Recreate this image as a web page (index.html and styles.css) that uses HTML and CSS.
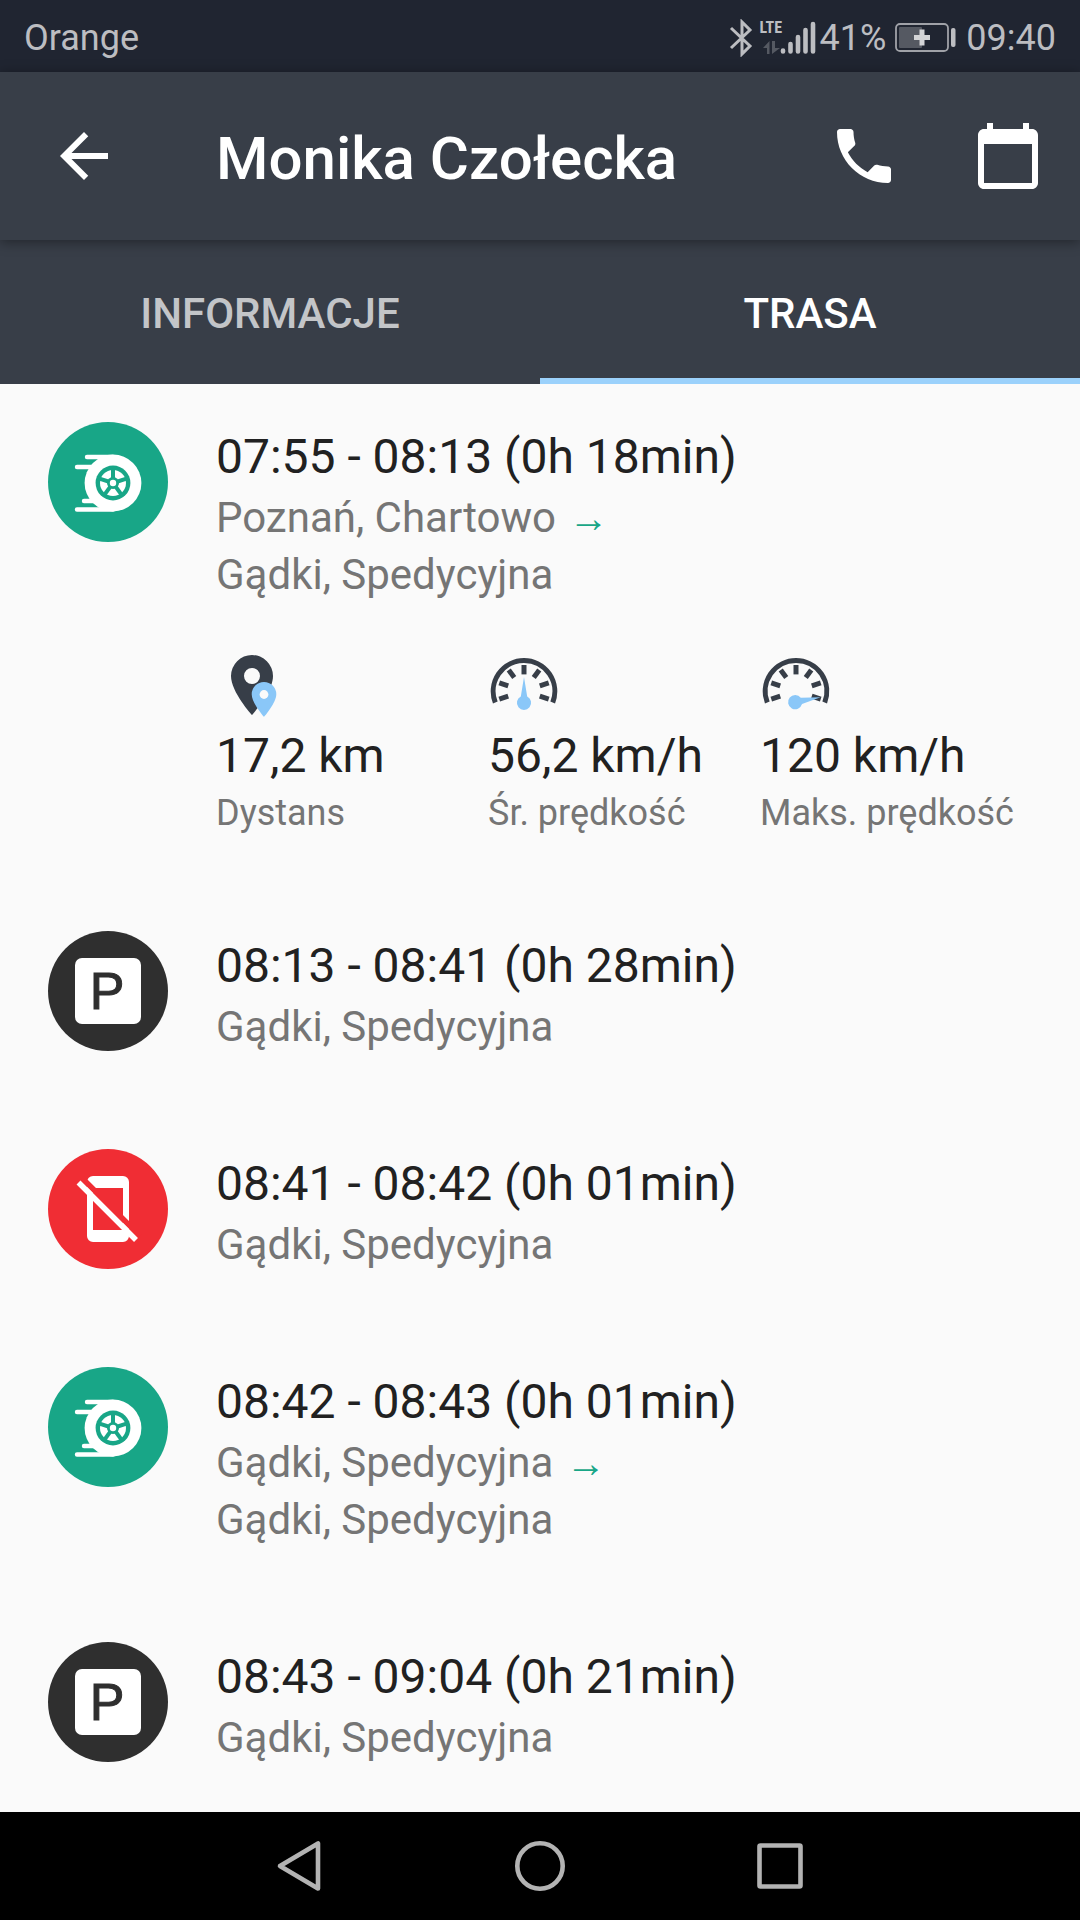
FILE: index.html
```html
<!DOCTYPE html>
<html lang="pl">
<head>
    <meta charset="UTF-8">
    <meta name="viewport" content="width=device-width, initial-scale=1.0">
    <title>Monika Czołecka - Trasa</title>
    <link rel="stylesheet" href="styles.css">
</head>
<body>
    <!-- shared icons -->
    <svg class="sprite" aria-hidden="true">
        <symbol id="icon-drive" viewBox="0 0 120 120">
            <g stroke="#fff" stroke-width="4.4" stroke-linecap="round">
                <path d="M39 35h26M29 45h20M36 79h16M29 87.500h36"/>
            </g>
            <circle cx="65" cy="61" r="28.400" fill="#fff"/>
            <circle cx="65" cy="61" r="17.400" fill="#18a687"/>
            <circle cx="65" cy="61" r="13" fill="#fff"/>
            <g stroke="#18a687" stroke-width="4">
                <path id="spoke" d="M65 61V46"/>
                <use href="#spoke" transform="rotate(72 65 61)"/>
                <use href="#spoke" transform="rotate(144 65 61)"/>
                <use href="#spoke" transform="rotate(216 65 61)"/>
                <use href="#spoke" transform="rotate(288 65 61)"/>
            </g>
            <circle cx="65" cy="61" r="6" fill="#18a687"/>
            <circle cx="65" cy="61" r="3.200" fill="#fff"/>
        </symbol>
        <symbol id="icon-gauge" viewBox="0 0 72 72">
            <path d="M7.300 50.500A30.800 30.800 0 1 1 64.700 50.500" fill="none" stroke="#373e48" stroke-width="5"/>
            <g stroke="#373e48" stroke-width="5">
                <path id="tick" d="M36 13v9.400"/>
                <use href="#tick" transform="rotate(36 36 39)"/>
                <use href="#tick" transform="rotate(72 36 39)"/>
                <use href="#tick" transform="rotate(108 36 39)"/>
                <use href="#tick" transform="rotate(-36 36 39)"/>
                <use href="#tick" transform="rotate(-72 36 39)"/>
                <use href="#tick" transform="rotate(-108 36 39)"/>
            </g>
        </symbol>
        <symbol id="icon-needle" viewBox="0 0 72 72">
            <path d="M36 25l3.200 19.500a7.100 7.100 0 1 1-6.400 0z" fill="#8ac7f8"/>
        </symbol>
    </svg>

    <div class="status-bar">
        <span class="carrier">Orange</span>
        <svg class="bluetooth" width="24" height="38" viewBox="0 0 24 38" fill="none" stroke="#bcbdc1" stroke-width="3">
            <path d="M2 9l19 18-8 8V3l8 8L2 29"/>
        </svg>
        <div class="network">
            <span class="lte">LTE</span>
            <svg width="56" height="36" viewBox="0 0 56 36">
                <path d="M9.500 21v13H7V28H3zM12 34V21h3v7h5z" fill="#555962"/>
                <g stroke="#bcbdc1" stroke-width="4.600" stroke-linecap="round">
                    <path d="M23 30.500v1M30.500 24v7.500M38 17v14.500M45.500 10v21.500M53 4v27.500"/>
                </g>
            </svg>
        </div>
        <span class="percent">41%</span>
        <svg class="battery" width="64" height="32" viewBox="0 0 64 32">
            <rect x="2" y="2" width="52" height="27" rx="4" fill="none" stroke="#a0a2a8" stroke-width="1.800"/>
            <rect x="5" y="5" width="23" height="21" rx="1" fill="#555962"/>
            <path d="M20 15.500h16M28 7.500v16" stroke="#d3d4d6" stroke-width="5"/>
            <rect x="57" y="6" width="4.500" height="19" rx="2" fill="#bcbdc1"/>
        </svg>
        <span class="clock">09:40</span>
    </div>

    <header class="toolbar">
        <button type="button" class="icon-button" aria-label="Wstecz">
            <svg viewBox="0 0 24 24"><path d="M20 11H7.830l5.590-5.590L12 4l-8 8 8 8 1.410-1.410L7.830 13H20v-2z"/></svg>
        </button>
        <h1>Monika Czołecka</h1>
        <div class="actions">
            <button type="button" class="icon-button" aria-label="Zadzwoń">
                <svg viewBox="0 0 24 24"><path d="M6.620 10.790c1.440 2.830 3.760 5.140 6.590 6.590l2.200-2.200c.27-.27.67-.36 1.020-.24 1.120.37 2.330.57 3.570.57.55 0 1 .45 1 1V20c0 .55-.45 1-1 1-9.390 0-17-7.610-17-17 0-.55.45-1 1-1h3.500c.55 0 1 .45 1 1 0 1.250.2 2.450.57 3.570.11.35.03.74-.25 1.020l-2.200 2.200z"/></svg>
            </button>
            <button type="button" class="icon-button" aria-label="Kalendarz">
                <svg viewBox="0 0 24 24"><path d="M20 3h-1V1h-2v2H7V1H5v2H4c-1.100 0-2 .9-2 2v16c0 1.100.9 2 2 2h16c1.100 0 2-.9 2-2V5c0-1.100-.9-2-2-2zm0 18H4V8h16v13z"/></svg>
            </button>
        </div>
    </header>

    <nav class="tabs">
        <a href="#informacje" class="tab">INFORMACJE</a>
        <a href="#trasa" class="tab active">TRASA</a>
    </nav>

    <main id="trasa" class="route">
        <section class="entry">
            <div class="badge drive"><svg><use href="#icon-drive"/></svg></div>
            <div class="details">
                <h2>07:55 - 08:13 (0h 18min)</h2>
                <p>Poznań, Chartowo <span class="arrow">→</span><br>Gądki, Spedycyjna</p>
                <div class="stats">
                    <div class="stat">
                        <svg viewBox="0 0 72 72">
                            <path fill="#373e48" fill-rule="evenodd" d="M36 3a21 21 0 0 0-21 21c0 16 21 39 21 39s21-23 21-39A21 21 0 0 0 36 3zm0 13a8 8 0 1 1 0 16 8 8 0 0 1 0-16z"/>
                            <path fill="#8ac7f8" d="M48 30a12.300 12.300 0 0 0-12.300 12.300C35.700 51 48 65 48 65s12.300-14 12.300-22.700A12.300 12.300 0 0 0 48 30z"/>
                            <circle cx="48" cy="42.500" r="4.400" fill="#fafafa"/>
                        </svg>
                        <strong>17,2 km</strong>
                        <span>Dystans</span>
                    </div>
                    <div class="stat">
                        <svg viewBox="0 0 72 72">
                            <use href="#icon-gauge"/>
                            <use href="#icon-needle"/>
                        </svg>
                        <strong>56,2 km/h</strong>
                        <span>Śr. prędkość</span>
                    </div>
                    <div class="stat">
                        <svg viewBox="0 0 72 72">
                            <use href="#icon-gauge"/>
                            <use href="#icon-needle" transform="rotate(79 36 50)"/>
                        </svg>
                        <strong>120 km/h</strong>
                        <span>Maks. prędkość</span>
                    </div>
                </div>
            </div>
        </section>

        <section class="entry">
            <div class="badge parking"><span>P</span></div>
            <div class="details">
                <h2>08:13 - 08:41 (0h 28min)</h2>
                <p>Gądki, Spedycyjna</p>
            </div>
        </section>

        <section class="entry">
            <div class="badge offline">
                <svg viewBox="0 0 120 120">
                    <path fill="#fff" fill-rule="evenodd" d="M45 27h30a6 6 0 0 1 6 6v54a6 6 0 0 1-6 6H45a6 6 0 0 1-6-6V33a6 6 0 0 1 6-6zm0 12v42h30V39z"/>
                    <path stroke="#f02d34" stroke-width="5.500" d="M34 29l58 58"/>
                    <path stroke="#fff" stroke-width="5.500" d="M30.500 33.500l57.500 57.500"/>
                </svg>
            </div>
            <div class="details">
                <h2>08:41 - 08:42 (0h 01min)</h2>
                <p>Gądki, Spedycyjna</p>
            </div>
        </section>

        <section class="entry">
            <div class="badge drive"><svg><use href="#icon-drive"/></svg></div>
            <div class="details">
                <h2>08:42 - 08:43 (0h 01min)</h2>
                <p>Gądki, Spedycyjna <span class="arrow">→</span><br>Gądki, Spedycyjna</p>
            </div>
        </section>

        <section class="entry">
            <div class="badge parking"><span>P</span></div>
            <div class="details">
                <h2>08:43 - 09:04 (0h 21min)</h2>
                <p>Gądki, Spedycyjna</p>
            </div>
        </section>
    </main>

    <footer class="system-nav">
        <button type="button" aria-label="Wstecz">
            <svg viewBox="0 0 72 72"><path d="M54 13.500v45L16 36z"/></svg>
        </button>
        <button type="button" aria-label="Ekran główny">
            <svg viewBox="0 0 72 72"><circle cx="36" cy="36" r="22.700"/></svg>
        </button>
        <button type="button" aria-label="Ostatnie aplikacje">
            <svg viewBox="0 0 72 72"><rect x="15.500" y="15.500" width="41" height="41" rx="1"/></svg>
        </button>
    </footer>
</body>
</html>
```
FILE: styles.css
```css
* {
    box-sizing: border-box;
}
body {
    display: flex;
    flex-direction: column;
    height: 100vh;
    margin: 0;
    font-family: Roboto, "Noto Sans", sans-serif;
    background-color: #fafafa;
    color: #212121;
}
h1, h2, p {
    margin: 0;
    font-weight: 400;
}
button {
    padding: 0;
    border: 0;
    background: none;
    cursor: pointer;
}
svg {
    display: block;
    flex-shrink: 0;
}
.sprite {
    position: absolute;
    width: 0;
    height: 0;
}

/* Status bar */
.status-bar {
    display: flex;
    flex-shrink: 0;
    align-items: center;
    height: 72px;
    padding: 4px 24px 0;
    background-color: #202531;
    color: #bcbdc1;
    font-size: 36px;
}
.carrier {
    flex: 1;
}
.network {
    position: relative;
    margin: 0 4px 0 7px;
}
.lte {
    position: absolute;
    top: 0;
    left: 0;
    font: bold 16px/16px "Roboto Condensed", "Liberation Sans Narrow", Roboto, sans-serif;
}
.battery {
    margin: 0 8px;
}

/* Toolbar */
.toolbar {
    display: flex;
    flex-shrink: 0;
    align-items: center;
    height: 168px;
    padding: 0 36px 0 48px;
    background-color: #383e48;
    color: #fff;
    box-shadow: 0 2px 12px rgba(0, 0, 0, 0.4);
    z-index: 1;
}
.toolbar h1 {
    flex: 1;
    margin-left: 96px;
    padding-top: 4px;
    font-size: 60px;
    font-weight: 500;
}
.icon-button svg {
    width: 72px;
    height: 72px;
    fill: #fff;
}
.actions {
    display: flex;
    gap: 72px;
}

/* Tabs */
.tabs {
    display: flex;
    flex-shrink: 0;
    height: 144px;
    background-color: #383e48;
}
.tab {
    display: flex;
    flex: 1;
    align-items: center;
    justify-content: center;
    padding-top: 8px;
    border-bottom: 6px solid transparent;
    color: #c3c5c8;
    font-size: 42px;
    font-weight: 500;
    text-decoration: none;
}
.tab.active {
    border-color: #9bd1fb;
    color: #fff;
}

/* Route list */
.route {
    flex: 1;
    min-height: 0;
    overflow-y: auto;
    scrollbar-width: none;
}
.entry {
    display: flex;
    gap: 48px;
    padding: 38px 48px 56px;
}
.badge {
    display: flex;
    flex-shrink: 0;
    align-items: center;
    justify-content: center;
    width: 120px;
    height: 120px;
    border-radius: 50%;
}
.badge svg {
    width: 120px;
    height: 120px;
}
.drive {
    background-color: #18a687;
}
.parking {
    background-color: #2f2f2f;
}
.offline {
    background-color: #f02d34;
}
.parking span {
    width: 66px;
    height: 66px;
    padding-right: 2px;
    border-radius: 7px;
    background-color: #fff;
    color: #2f2f2f;
    font: 52px/66px "Liberation Sans", Arial, sans-serif;
    text-align: center;
    -webkit-text-stroke: 1px #2f2f2f;
}
.details {
    flex: 1;
    padding-top: 3px;
}
.details h2 {
    font-size: 48px;
    line-height: 64px;
}
.details p {
    color: #757575;
    font-size: 42px;
    line-height: 57px;
}
.arrow {
    margin-left: 2px;
    color: #18a687;
    font: 40px/40px "Liberation Serif", serif;
}
.stats {
    display: grid;
    grid-template-columns: repeat(3, 1fr);
    margin: 49px -48px 0 0;
    padding-right: 48px;
}
.stat svg {
    width: 72px;
    height: 72px;
}
.stat strong {
    display: block;
    font-size: 48px;
    font-weight: 400;
    line-height: 64px;
}
.stat span {
    display: block;
    color: #757575;
    font-size: 36px;
    line-height: 50px;
    margin-bottom: -1px;
    white-space: nowrap;
}

/* System navigation */
.system-nav {
    display: grid;
    flex-shrink: 0;
    grid-template-columns: repeat(3, 1fr);
    align-items: center;
    height: 108px;
    padding: 0 16.666%;
    background-color: #000;
}
.system-nav button {
    display: flex;
    justify-content: center;
}
.system-nav svg {
    width: 72px;
    height: 72px;
    fill: none;
    stroke: #b3b3b3;
    stroke-width: 4.6;
    stroke-linejoin: round;
}
```
